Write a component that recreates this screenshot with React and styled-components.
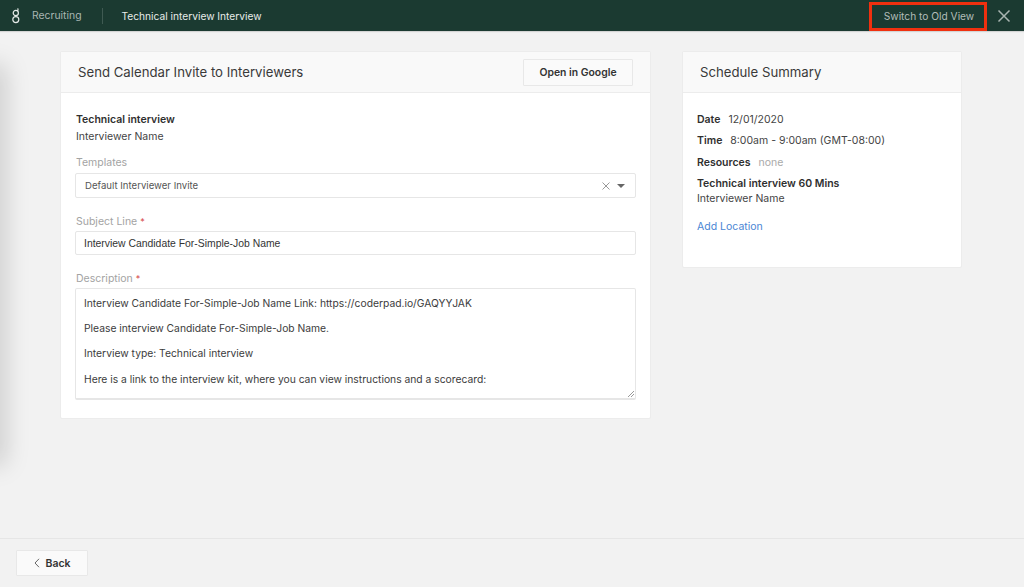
import React from 'react';
import styled, { createGlobalStyle } from 'styled-components';

const Global = createGlobalStyle`
  html, body { margin: 0; padding: 0; height: 100%; }
  body { font-family: Inter, "Liberation Sans", sans-serif; color: #333; background: #f2f2f2; -webkit-font-smoothing: antialiased; }
  #root { height: 100%; }
  * { box-sizing: border-box; }
`;

const Page = styled.div`
  width: 1024px; height: 587px; display: flex; flex-direction: column; overflow: hidden; position: relative; background: #f2f2f2;
  &::before {
    content: ""; position: absolute; left: -14px; top: 70px; width: 14px; height: 390px;
    box-shadow: 0 0 24px 5px rgba(0,0,0,.17);
  }
`;
const TopBar = styled.header`
  height: 31px; flex: none; background: #1b3a31; display: flex; align-items: center; padding: 0 13px 0 11px; box-shadow: 0 1px 1px rgba(0,0,0,.12); position: relative; z-index: 1;
`;
const Logo = styled.svg`width: 10px; height: 17px; margin-right: 11px; flex: none;`;
const Crumb = styled.span`font-size: 10.4px; color: #a9b6b1;`;
const Divider = styled.span`width: 1px; height: 16px; background: #3f5a52; margin: 0 19px 0 20px;`;
const Title = styled.span`font-size: 10.2px; color: #e8ecea;`;
const SwitchBtn = styled.button`
  margin-left: auto; margin-right: -1px; width: 118px; height: 29px; margin-top: 2px; border: 3px solid #f0300f; background: transparent; color: #b3bdb9;
  font: 400 10.2px Inter, "Liberation Sans", sans-serif; padding: 0 0 2px 2px;
`;
const CloseBtn = styled.button`
  margin-left: 11px; width: 14px; height: 14px; padding: 0; border: 0; background: none; display: flex;
  svg { width: 14px; height: 14px; }
`;
const Main = styled.main`
  flex: 1; display: grid; grid-template-columns: 591px 280px; gap: 31px; padding: 20px 0 0 60px; align-items: start;
`;
const Card = styled.section`
  background: #fff; border-radius: 2px; border: 1px solid #ececec;
  height: ${p => p.$h}px;
`;
const CardHead = styled.div`
  height: 41px; background: #f9f9f9; border-bottom: 1px solid #ececec; display: flex; align-items: center; justify-content: space-between;
  padding: 0 17px 0 17px;
`;
const CardTitle = styled.h2`margin: 0 0 1px; font-weight: 400; font-size: 13.2px; color: #3a3a3a;`;
const OutlineBtn = styled.button`
  width: 110px; height: 27px; background: #fafafa; border: 1px solid #e8e8e8; border-radius: 1px; font: 600 10.4px Inter, "Liberation Sans", sans-serif; color: #333; padding: 0;
`;
const Body = styled.div`padding: 19px 14px 0;`;
const Intro = styled.div`padding-left: 1px;`;
const Strong = styled.div`font-size: 10.5px; font-weight: 600; color: #2f2f2f; line-height: 15px;`;
const Plain = styled.div`font-size: 10.5px; color: #444; line-height: 15px; margin-top: ${p => p.$mt || 0}px;`;
const Label = styled.div`font-size: 10.5px; color: #a3a3a3; line-height: 14px; margin: ${p => p.$mt}px 0 ${p => p.$mb}px 1px;
  i { color: #d64545; font-style: normal; font-size: 9px; margin-left: 3px; }`;
const SelectBox = styled.div`
  height: 25px; border: 1px solid #e6e6e6; border-radius: 2px; display: flex; align-items: center; padding: 0 10px 0 9px;
  font-size: 9.6px; color: #555;
`;
const SelectText = styled.span`flex: 1;`;
const ClearIcon = styled.svg`width: 8px; height: 8px; margin-right: 7px;`;
const Caret = styled.span`width: 0; height: 0; border-left: 4px solid transparent; border-right: 4px solid transparent; border-top: 4px solid #666;`;
const TextInput = styled.div`
  height: 24px; border: 1px solid #e6e6e6; border-radius: 2px; display: flex; align-items: center; padding: 0 8px;
  font: 10.4px "Liberation Sans", Arial, sans-serif; color: #333;
`;
const TextArea = styled.div`
  height: 112px; border: 1px solid #e6e6e6; border-bottom-width: 2px; border-radius: 2px; padding: 6px 8px; position: relative; overflow: hidden;
  font-size: 10.3px; color: #3c3c3c;
  p { margin: 0 0 9.2px; line-height: 16px; height: 16px; white-space: nowrap; }
`;
const Grip = styled.svg`position: absolute; right: 0; bottom: 0; width: 8px; height: 8px;`;
const Side = styled.div`padding: 19px 14px 0; display: flex; flex-direction: column;`;
const Row = styled.div`font-size: 10.5px; line-height: 15px; height: 15px; margin-bottom: 6.3px; color: #444; display: flex; gap: ${p => p.$g}px;
  b { font-weight: 600; color: #2f2f2f; }
  span.mute { color: #a9a9a9; }`;
const LinkText = styled.a`font-size: 10.5px; color: #4a86d4; line-height: 15px; margin-top: 13px;`;
const Footer = styled.footer`
  height: 49px; flex: none; border-top: 1px solid #e6e6e6; display: flex; align-items: flex-start; padding: 11px 0 0 16px;
`;
const BackBtn = styled.button`
  width: 72px; height: 26px; background: #fafafa; border: 1px solid #e8e8e8; border-radius: 1px; display: flex; align-items: center; justify-content: center; gap: 5px; padding: 0 0 0 1px;
  font: 600 10.5px Inter, "Liberation Sans", sans-serif; color: #333;
  svg { width: 6px; height: 10px; }
`;

export default function App() {
  return (
    <Page>
      <Global />
      <TopBar>
        <Logo viewBox="0 0 10 17" fill="none" stroke="#e4e9e7" strokeWidth="1.2">
          <circle cx="4.8" cy="6" r="2.6" />
          <circle cx="4.8" cy="12.6" r="3" />
          <path d="M6.5 3.8c.6-.5.7-1.2.4-2" strokeLinecap="round" />
        </Logo>
        <Crumb>Recruiting</Crumb>
        <Divider />
        <Title>Technical interview Interview</Title>
        <SwitchBtn>Switch to Old View</SwitchBtn>
        <CloseBtn aria-label="Close">
          <svg viewBox="0 0 14 14" fill="none" stroke="#aab5b1" strokeWidth="1.5"><path d="M1.5 1.5l11 11M12.5 1.5l-11 11" /></svg>
        </CloseBtn>
      </TopBar>
      <Main>
        <Card $h={368}>
          <CardHead>
            <CardTitle>Send Calendar Invite to Interviewers</CardTitle>
            <OutlineBtn>Open in Google</OutlineBtn>
          </CardHead>
          <Body>
            <Intro>
              <Strong>Technical interview</Strong>
              <Plain $mt={2}>Interviewer Name</Plain>
            </Intro>
            <Label $mt={12} $mb={3}>Templates</Label>
            <SelectBox>
              <SelectText>Default Interviewer Invite</SelectText>
              <ClearIcon viewBox="0 0 8 8" fill="none" stroke="#999" strokeWidth="1"><path d="M.5.5l7 7M7.5.5l-7 7" /></ClearIcon>
              <Caret />
            </SelectBox>
            <Label $mt={17} $mb={2}>Subject Line<i>*</i></Label>
            <TextInput>Interview Candidate For-Simple-Job Name</TextInput>
            <Label $mt={17} $mb={2}>Description<i>*</i></Label>
            <TextArea>
              <p>Interview Candidate For-Simple-Job Name Link: https://coderpad.io/GAQYYJAK</p>
              <p>Please interview Candidate For-Simple-Job Name.</p>
              <p>Interview type: Technical interview</p>
              <p>Here is a link to the interview kit, where you can view instructions and a scorecard:</p>
              <Grip viewBox="0 0 8 8" stroke="#999" strokeWidth="1"><path d="M1 7l6-6M4 7l3-3" /></Grip>
            </TextArea>
          </Body>
        </Card>
        <Card $h={217}>
          <CardHead>
            <CardTitle>Schedule Summary</CardTitle>
          </CardHead>
          <Side>
            <Row $g={8}><b>Date</b><span>12/01/2020</span></Row>
            <Row $g={8}><b>Time</b><span>8:00am - 9:00am (GMT-08:00)</span></Row>
            <Row $g={8}><b>Resources</b><span className="mute">none</span></Row>
            <Strong>Technical interview 60 Mins</Strong>
            <Plain>Interviewer Name</Plain>
            <LinkText>Add Location</LinkText>
          </Side>
        </Card>
      </Main>
      <Footer>
        <BackBtn>
          <svg viewBox="0 0 6 10" fill="none" stroke="#666" strokeWidth="1"><path d="M5 .8L1 5l4 4.2" /></svg>
          Back
        </BackBtn>
      </Footer>
    </Page>
  );
}
